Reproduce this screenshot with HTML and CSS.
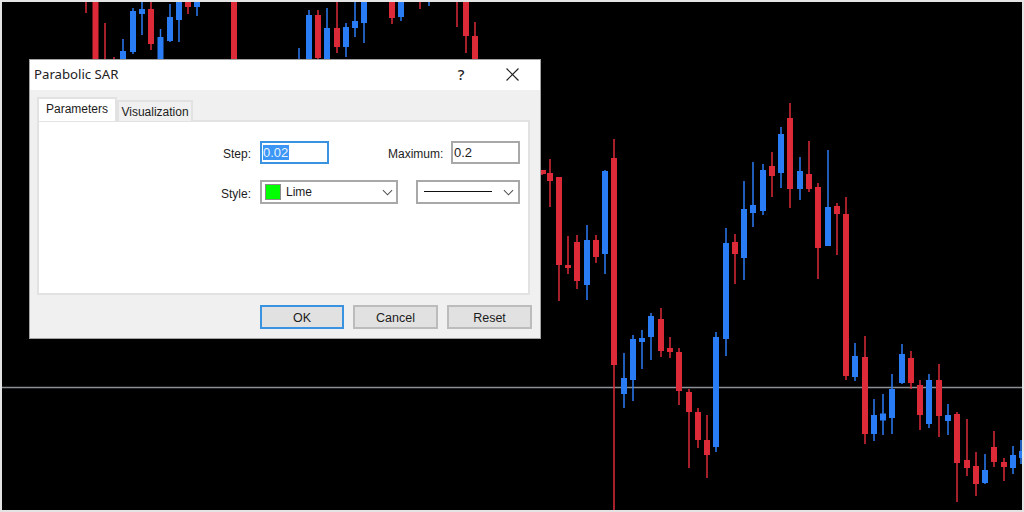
FILE: index.html
```html
<!DOCTYPE html>
<html lang="en">
<head>
<meta charset="utf-8">
<title>Parabolic SAR</title>
<link rel="stylesheet" href="styles.css">
</head>
<body>
<main class="stage">
  <svg class="chart" viewBox="2 2 1020 508" aria-hidden="true">
    <path class="hair" d="M2 387.5H1022"/>
    <path class="wick red" d="M86 0V13M95.5 0V60M105 23V60M114 57V60M151 0V50M188 0V14M234 0V60M318 10V60M337 0V53M392 0V24M420 0V9M457 0V27M466 0V53M475 22V60M542 170V175M550 159V207M559 177V301M568 236V274M577 235V289M596 235V263M614 139V510M661 308V357M670 337V358M679 348V405M689 389V468M698 408V448M707 415V478M735 234V284M772 152V197M790 103V208M809 141V192M818 183V279M837 203V255M846 197V380M865 336V444M911 351V389M920 380V430M939 364V437M957 412V502M967 419V476M976 452V496M994 431V467M1004 458V481"/>
    <path class="body red" d="M95.5 0V60M151 9V44M188 0V7M234 0V60M318 15V58M337 28V47M392 0V18M466 0V36M475 36V60M543 170V174M559 177V265M568 265V268M577 242V281M596 240V257M614 158V365M661 319V351M670 348V352M679 352V391M689 392V412M698 412V440M707 440V455M735 242V254M790 118V189M809 174V189M818 187V248M837 206V214M846 214V376M865 357V434M911 358V383M920 385V415M939 380V416M957 414V463M976 466V484M994 447V462M1004 462V467"/>
    <path class="body thin red" d="M550 176V178M772 169V173M967 463V465"/>
    <path class="wick blue" d="M123 39V60M133 8V54M142 0V35M160.500 29V60M170 4V42M179 0V42M197 0V16M299 48V60M309 10V60M327 8V60M346 23V57M355 0V37M364 0V43M401 0V21M429 0V6M587 225V300M605 170V274M624 353V408M633 335V401M642 330V369M651 313V360M716 332V452M726 228V356M744 181V280M753 162V227M763 164V215M781 127V188M800 157V200M828 150V246M855 343V381M874 399V441M883 394V435M892 374V434M902 344V384M929 374V428M948 404V435M985 454V484M1013 446V474M1021 440V464"/>
    <path class="body blue" d="M123 51V60M133 11V52M142 9V14M160.500 37V60M170 17V41M179 0V20M197 0V7M309 15V60M327 28V60M346 27V47M355 21V28M364 0V23M401 0V17M587 240V285M605 171V254M624 378V394M633 339V380M642 338V342M651 316V337M716 337V447M726 243V339M744 209V258M753 205V213M763 170V211M781 134V173M800 171V189M828 207V246M855 356V377M874 415V434M892 389V418M902 354V383M929 380V424M948 415V421M985 470V483M1013 455V468M1022 451V458"/>
    <path class="body thin blue" d="M883 416.500V417.500"/>
  </svg>

  <section class="dialog">
    <header class="titlebar">
      <h1 class="title">Parabolic SAR</h1>
      <span class="help">?</span>
      <svg class="close" viewBox="0 0 12 12" aria-hidden="true"><path d="M0.5 0.5L11.500 11.500M11.500 0.5L0.500 11.500"/></svg>
    </header>
    <div class="content">
      <nav class="tabs">
        <span class="tab active">Parameters</span>
        <span class="tab">Visualization</span>
      </nav>
      <div class="panel">
        <div class="row row-top">
          <span class="label">Step:</span>
          <span class="field focused"><span class="selected">0.02</span></span>
          <span class="label label-max">Maximum:</span>
          <span class="field">0.2</span>
        </div>
        <div class="row">
          <span class="label">Style:</span>
          <span class="select select-style">
            <span class="swatch"></span>
            <span class="select-text">Lime</span>
            <svg class="chevron" viewBox="0 0 12 7" aria-hidden="true"><path d="M1 1L6 6L11 1"/></svg>
          </span>
          <span class="select select-line">
            <span class="line-sample"></span>
            <svg class="chevron" viewBox="0 0 12 7" aria-hidden="true"><path d="M1 1L6 6L11 1"/></svg>
          </span>
        </div>
      </div>
      <footer class="actions">
        <button class="btn btn-default">OK</button>
        <button class="btn">Cancel</button>
        <button class="btn">Reset</button>
      </footer>
    </div>
  </section>
</main>
</body>
</html>
```
FILE: styles.css
```css
* { box-sizing: border-box; }

html, body {
  margin: 0;
  padding: 0;
  background: #000;
}

.stage {
  position: relative;
  width: 1024px;
  height: 512px;
  border: 2px solid #e4e4e4;
  background: #000;
  overflow: hidden;
  font-family: "Liberation Sans", Arial, sans-serif;
  font-size: 12px;
  color: #1c1c1c;
}

.chart {
  display: block;
  width: 1020px;
  height: 508px;
}

.hair { stroke: #8b9096; stroke-width: 1.3; fill: none; }
.wick { stroke-width: 1.5; fill: none; }
.body { stroke-width: 6; fill: none; }
.thin { stroke-linecap: square; }
.red { stroke: #dc2a38; }
.blue { stroke: #2a7cf5; }

.dialog {
  position: absolute;
  left: 27px;
  top: 57px;
  width: 512px;
  height: 280px;
  border: 1px solid #a3a3a3;
  background: #f0f0f0;
  display: flex;
  flex-direction: column;
}

.titlebar {
  height: 30px;
  flex: none;
  background: #fff;
  display: flex;
  align-items: center;
  padding: 0 0 2px 4px;
}

.title {
  margin: 0;
  flex: 1;
  font-family: "Noto Sans", sans-serif;
  font-size: 13.200px;
  font-weight: 400;
  color: #222;
}

.help {
  width: 12px;
  text-align: center;
  font-family: "Noto Sans", sans-serif;
  font-size: 15px;
  font-weight: 500;
  color: #222;
  margin-right: 39px;
}

.close {
  width: 13px;
  height: 13px;
  margin-right: 21px;
  fill: none;
  stroke: #222;
  stroke-width: 1.1;
}

.content {
  flex: 1;
  padding: 7px 8px 0 7px;
}

.tabs {
  display: flex;
  align-items: flex-end;
  height: 24px;
  margin-bottom: -1px;
  position: relative;
  z-index: 1;
}

.tab {
  height: 21px;
  width: 76px;
  border: 2px solid #e2e2e2;
  border-bottom: 0;
  background: #f0f0f0;
  text-align: center;
  line-height: 20px;
  font-size: 12px;
}

.tab.active {
  height: 24px;
  width: 80px;
  background: #fff;
  line-height: 20px;
  font-size: 12px;
}

.panel {
  width: 493px;
  height: 175px;
  background: #fff;
  border: 2px solid #e2e2e2;
  padding: 19px 8px 0 0;
}

.row {
  display: flex;
  justify-content: flex-end;
  align-items: center;
  height: 24px;
}

.row-top {
  height: 23px;
  margin-bottom: 16px;
}

.label {
  margin-right: 9px;
  padding-top: 3px;
  font-size: 12px;
}

.label-max { margin-left: 59px; width: 54px; white-space: nowrap; }

.field {
  width: 69px;
  height: 23px;
  border: 2px solid #a8a8a8;
  background: #fff;
  padding-left: 1px;
  line-height: 19px;
  font-size: 13px;
}

.focused { border-color: #3a93e0; }

.selected {
  display: inline-block;
  background: #3b96f5;
  color: #e8f3ff;
  line-height: 15px;
  height: 15px;
  padding-right: 1px;
}

.select {
  height: 24px;
  border: 2px solid #a8a8a8;
  background: #fff;
  display: flex;
  align-items: center;
}

.select-style { width: 138px; padding-left: 3px; }
.select-line { width: 104px; margin-left: 18px; padding-left: 6px; }

.swatch {
  width: 16px;
  height: 16px;
  background: #00ff00;
  border: 1px solid #8c8c8c;
  flex: none;
}

.select-text { margin-left: 5px; flex: 1; }

.line-sample {
  flex: 1;
  height: 0;
  border-top: 1px solid #111;
  margin-bottom: 1px;
}

.chevron {
  width: 11px;
  height: 7px;
  margin: 0 4px 0 0;
  flex: none;
  fill: none;
  stroke: #555;
  stroke-width: 1.2;
}

.select-line .line-sample { margin-right: 11px; }
.select-style .chevron { margin-right: 3px; }

.actions {
  display: flex;
  justify-content: flex-end;
  gap: 9px;
  margin-top: 10px;
}

.btn {
  width: 85px;
  height: 24px;
  padding: 2px 0 0;
  border: 2px solid #bcbcbc;
  background: #e1e1e1;
  font: inherit;
  font-size: 12.500px;
  color: #1c1c1c;
}

.btn-default {
  width: 84px;
  border-color: #3a93e0;
}
```
